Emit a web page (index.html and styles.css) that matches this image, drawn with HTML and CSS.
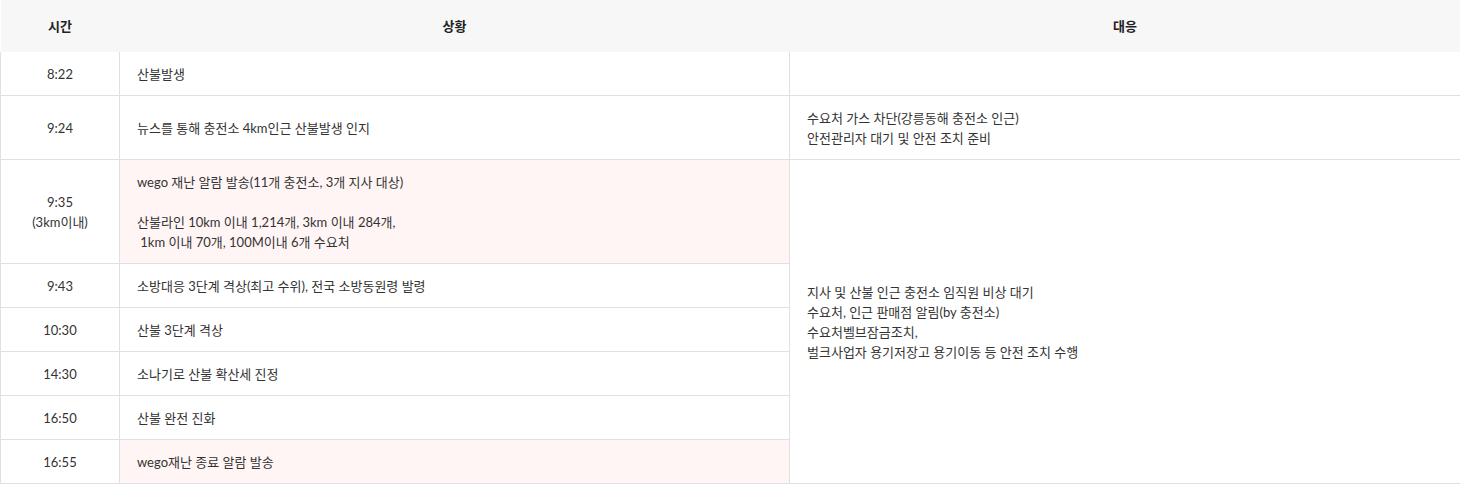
FILE: index.html
```html
<!DOCTYPE html>
<html lang="ko">
<head>
<meta charset="utf-8">
<link rel="stylesheet" href="styles.css">
</head>
<body>
<table class="timeline">
  <colgroup>
    <col class="c-time">
    <col class="c-situ">
    <col class="c-resp">
  </colgroup>
  <thead>
    <tr><th>시간</th><th>상황</th><th>대응</th></tr>
  </thead>
  <tbody>
    <tr><td class="time">8:22</td><td>산불발생</td><td></td></tr>
    <tr><td class="time">9:24</td><td>뉴스를 통해 충전소 4km인근 산불발생 인지</td><td>수요처 가스 차단(강릉동해 충전소 인근)<br>안전관리자 대기 및 안전 조치 준비</td></tr>
    <tr><td class="time">9:35<br>(3km이내)</td><td class="hl">wego 재난 알람 발송(11개 충전소, 3개 지사 대상)<br><br>산불라인 10km 이내 1,214개, 3km 이내 284개,<br>&nbsp;1km 이내 70개, 100M이내 6개 수요처</td><td rowspan="6">지사 및 산불 인근 충전소 임직원 비상 대기<br>수요처, 인근 판매점 알림(by 충전소)<br>수요처벨브잠금조치,<br>벌크사업자 용기저장고 용기이동 등 안전 조치 수행</td></tr>
    <tr><td class="time">9:43</td><td>소방대응 3단계 격상(최고 수위), 전국 소방동원령 발령</td></tr>
    <tr><td class="time">10:30</td><td>산불 3단계 격상</td></tr>
    <tr><td class="time">14:30</td><td>소나기로 산불 확산세 진정</td></tr>
    <tr><td class="time">16:50</td><td>산불 완전 진화</td></tr>
    <tr><td class="time">16:55</td><td class="hl">wego재난 종료 알람 발송</td></tr>
  </tbody>
</table>
</body>
</html>
```
FILE: styles.css
```css
html, body {
  margin: 0;
  padding: 0;
  background: #fff;
}
body {
  font-family: Lato, "Noto Sans CJK KR", sans-serif;
  font-size: 13px;
  line-height: 20px;
  color: #333;
}
.timeline {
  width: 1460px;
  border-collapse: collapse;
  table-layout: fixed;
}
.c-time { width: 119px; }
.c-situ { width: 670px; }
.c-resp { width: 671px; }
.timeline th {
  background: #f7f7f7;
  font-weight: 700;
  color: #222;
  text-align: center;
  padding: 16px 0;
  height: 20px;
}
.timeline td {
  border: 1px solid #e0e0e0;
  padding: 12px 17px 11px;
  vertical-align: middle;
  text-align: left;
}
.timeline tbody tr:first-child td {
  border-top: 0;
}
.timeline td.time {
  text-align: center;
  padding-left: 0;
  padding-right: 0;
}
.timeline td.hl {
  background: #fff5f5;
}
```
